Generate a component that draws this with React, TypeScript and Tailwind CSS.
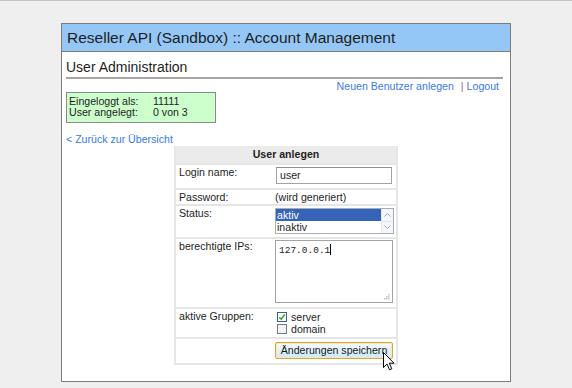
import React from 'react'

const font = { fontFamily: '"Liberation Sans", Arial, sans-serif' }

const Row = ({ label, children, h }: { label?: string; children?: React.ReactNode; h: string }) => (
  <div className={`flex border-t-2 border-[#e6e6e6] ${h}`}>
    <div className='w-[99px] shrink-0 pl-[3px] pt-[1px] leading-[13px]'>{label}</div>
    <div className='flex-1'>{children}</div>
  </div>
)

const Cursor = () => (
  <svg className='absolute left-[383px] top-[351px]' width='12' height='19' viewBox='0 0 12 19'>
    <path d='M0.5 0.5 L0.5 15.5 L4 12 L6.5 17.8 L8.8 16.8 L6.3 11.2 L11 11.2 Z' fill='#fff' stroke='#000' strokeWidth='1' strokeLinejoin='round' />
  </svg>
)

export default function App() {
  return (
    <div className='relative w-[572px] h-[388px] bg-[#efefef] border-t border-[#c4c4c4] overflow-hidden text-[#1e1e1e]' style={font}>
      <div className='ml-[61px] mt-[22px] w-[450px] h-[359px] bg-white border border-[#807b79]'>
        {/* header */}
        <div className='h-[28px] bg-[#95c7f6] border-b border-[#807b79] pl-[5px] pt-[5px] text-[15.5px] leading-[18px]'>
          Reseller API (Sandbox) :: Account Management
        </div>

        <div className='px-[4px]'>
          <div className='mt-[7px] text-[14px] leading-[16px] pb-[2px] border-b-2 border-[#a9a4a2] mr-[3px]'>
            User Administration
          </div>

          <div className='flex justify-end items-center mt-[1px] mr-[7px] text-[10.6px] leading-[12px]'>
            <span className='text-[#3a79e6]'>Neuen Benutzer anlegen</span>
            <span className='ml-[7px] mr-[3px] text-[#8b6b9c]'>|</span>
            <span className='text-[#3a79e6]'>Logout</span>
          </div>

          <div className='w-[150px] h-[31px] bg-[#ccffcc] border border-[#8a8a8a] px-[2px] pt-[3px] text-[10.6px] leading-[11px]'>
            <div className='flex'><span className='w-[84px]'>Eingeloggt als:</span><span>11111</span></div>
            <div className='flex'><span className='w-[84px]'>User angelegt:</span><span>0 von 3</span></div>
          </div>

          <div className='mt-[10px] text-[10.6px] leading-[13px] text-[#3a79e6]'>&lt; Zurück zur Übersicht</div>

          {/* form table */}
          <div className='ml-[108px] w-[224px] border-x-2 border-b-2 border-[#e6e6e6] text-[10.6px]'>
            <div className='h-[17px] bg-[#ebebeb] font-bold text-center leading-[17px] text-[#222]'>User anlegen</div>
            <Row label='Login name:' h='h-[25px]'>
              <div className='mt-[2px] ml-[1px] w-[116px] h-[17px] border border-[#a3a3a3] border-t-[#8f8f8f] pl-[3px] leading-[15px]'>user</div>
            </Row>
            <Row label='Password:' h='h-[16px]'>
              <div className='leading-[13px] pt-[1px]'>(wird generiert)</div>
            </Row>
            <Row label='Status:' h='h-[33px]'>
              <div className='mt-[2px] flex w-[119px] h-[26px] border border-[#a6adb6]'>
                <div className='flex-1 leading-[12px]'>
                  <div className='bg-[#3563b7] text-white pl-[1px]'>aktiv</div>
                  <div className='pl-[1px]'>inaktiv</div>
                </div>
                <div className='w-[12px] flex flex-col bg-[#f4f6f9] border-l border-[#e3e7ec]'>
                  <div className='flex-1 flex items-center justify-center border-b border-[#e3e7ec]'>
                    <svg width='7' height='4' viewBox='0 0 7 4'><path d='M0.5 3.5 L3.5 0.5 L6.5 3.5' fill='none' stroke='#9aa6b6' strokeWidth='1' /></svg>
                  </div>
                  <div className='flex-1 flex items-center justify-center'>
                    <svg width='7' height='4' viewBox='0 0 7 4'><path d='M0.5 0.5 L3.5 3.5 L6.5 0.5' fill='none' stroke='#9aa6b6' strokeWidth='1' /></svg>
                  </div>
                </div>
              </div>
            </Row>
            <Row label='berechtigte IPs:' h='h-[70px]'>
              <div className='relative mt-[1px] w-[118px] h-[63px] border border-[#a3a3a3] pl-[3px] pt-[3px] text-[9.5px] leading-[12px]' style={{ fontFamily: '"Liberation Mono", "Courier New", monospace' }}>
                127.0.0.1<span className='inline-block w-[1px] h-[11px] bg-black align-[-2px]'></span>
                <svg className='absolute right-[2px] bottom-[2px]' width='7' height='7' viewBox='0 0 7 7'>
                  <g fill='#c4c4c4'>
                    <rect x='5' y='1' width='1.5' height='1.5' />
                    <rect x='3' y='3' width='1.5' height='1.5' />
                    <rect x='5' y='3' width='1.5' height='1.5' />
                    <rect x='1' y='5' width='1.5' height='1.5' />
                    <rect x='3' y='5' width='1.5' height='1.5' />
                    <rect x='5' y='5' width='1.5' height='1.5' />
                  </g>
                </svg>
              </div>
            </Row>
            <Row label='aktive Gruppen:' h='h-[30px]'>
              <div className='pl-[2px] pt-[2px] leading-[12px]'>
                <div className='flex items-center'>
                  <span className='w-[10px] h-[10px] border border-[#3f5d86] bg-white flex items-center justify-center mr-[4px]'>
                    <svg width='8' height='8' viewBox='0 0 8 8'><path d='M1.2 4.2 L3.2 6.2 L6.8 1.5' fill='none' stroke='#2aa32a' strokeWidth='1.5' /></svg>
                  </span>
                  server
                </div>
                <div className='flex items-center'>
                  <span className='w-[10px] h-[10px] border border-[#707a88] bg-[#f4f4f4] mr-[4px]'></span>
                  domain
                </div>
              </div>
            </Row>
            <Row h='h-[26px]'>
              <div className='pt-[3px]'>
                <div className='w-[118px] h-[17px] rounded-[2px] border border-[#d9a440] bg-gradient-to-b from-[#f6fbfe] to-[#c9e9fb] text-center leading-[15px] text-[#1a1a1a] shadow-[inset_0_0_0_1px_#fbe8b8]'>
                  Änderungen speichern
                </div>
              </div>
            </Row>
          </div>
        </div>
      </div>
      <Cursor />
    </div>
  )
}
